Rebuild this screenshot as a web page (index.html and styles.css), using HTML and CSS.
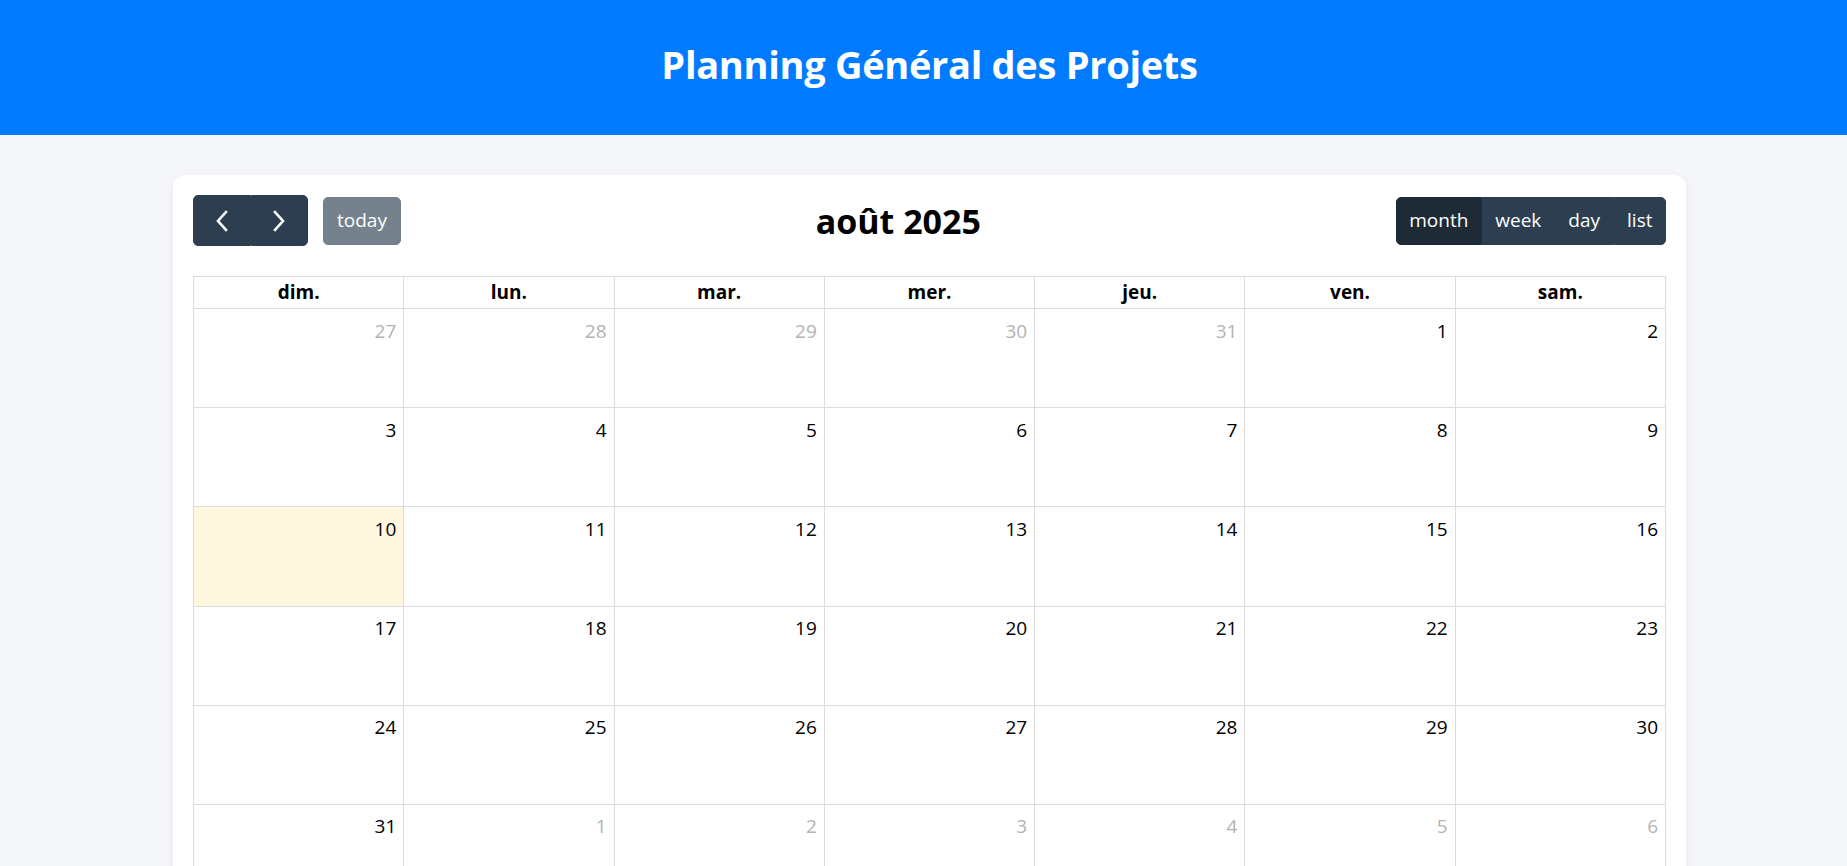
FILE: index.html
```html
<!DOCTYPE html>
<html lang="fr">
<head>
<meta charset="utf-8">
<title>Planning Général des Projets</title>
<link rel="stylesheet" href="styles.css">
</head>
<body>
<header class="site-header">
  <h1 class="site-title">Planning Général des Projets</h1>
</header>
<main class="page">
  <section class="calendar-card">
    <div class="toolbar">
      <div class="toolbar-chunk">
        <div class="btn-group nav-group">
          <button class="btn btn-icon" aria-label="prev">
            <svg width="14" height="22" viewBox="0 0 14 22"><path d="M11 2 L3 11 L11 20" fill="none" stroke="#fff" stroke-width="2.6" stroke-linecap="square"/></svg>
          </button>
          <button class="btn btn-icon" aria-label="next">
            <svg width="14" height="22" viewBox="0 0 14 22"><path d="M3 2 L11 11 L3 20" fill="none" stroke="#fff" stroke-width="2.6" stroke-linecap="square"/></svg>
          </button>
        </div>
        <button class="btn btn-today" disabled>today</button>
      </div>
      <h2 class="toolbar-title">août 2025</h2>
      <div class="toolbar-chunk">
        <div class="btn-group view-group">
          <button class="btn active">month</button>
          <button class="btn">week</button>
          <button class="btn">day</button>
          <button class="btn">list</button>
        </div>
      </div>
    </div>
    <div class="month-grid">
      <div class="dow">dim.</div>
      <div class="dow">lun.</div>
      <div class="dow">mar.</div>
      <div class="dow">mer.</div>
      <div class="dow">jeu.</div>
      <div class="dow">ven.</div>
      <div class="dow">sam.</div>

      <div class="day other"><span class="num">27</span></div>
      <div class="day other"><span class="num">28</span></div>
      <div class="day other"><span class="num">29</span></div>
      <div class="day other"><span class="num">30</span></div>
      <div class="day other"><span class="num">31</span></div>
      <div class="day"><span class="num">1</span></div>
      <div class="day"><span class="num">2</span></div>

      <div class="day"><span class="num">3</span></div>
      <div class="day"><span class="num">4</span></div>
      <div class="day"><span class="num">5</span></div>
      <div class="day"><span class="num">6</span></div>
      <div class="day"><span class="num">7</span></div>
      <div class="day"><span class="num">8</span></div>
      <div class="day"><span class="num">9</span></div>

      <div class="day today"><span class="num">10</span></div>
      <div class="day"><span class="num">11</span></div>
      <div class="day"><span class="num">12</span></div>
      <div class="day"><span class="num">13</span></div>
      <div class="day"><span class="num">14</span></div>
      <div class="day"><span class="num">15</span></div>
      <div class="day"><span class="num">16</span></div>

      <div class="day"><span class="num">17</span></div>
      <div class="day"><span class="num">18</span></div>
      <div class="day"><span class="num">19</span></div>
      <div class="day"><span class="num">20</span></div>
      <div class="day"><span class="num">21</span></div>
      <div class="day"><span class="num">22</span></div>
      <div class="day"><span class="num">23</span></div>

      <div class="day"><span class="num">24</span></div>
      <div class="day"><span class="num">25</span></div>
      <div class="day"><span class="num">26</span></div>
      <div class="day"><span class="num">27</span></div>
      <div class="day"><span class="num">28</span></div>
      <div class="day"><span class="num">29</span></div>
      <div class="day"><span class="num">30</span></div>

      <div class="day"><span class="num">31</span></div>
      <div class="day other"><span class="num">1</span></div>
      <div class="day other"><span class="num">2</span></div>
      <div class="day other"><span class="num">3</span></div>
      <div class="day other"><span class="num">4</span></div>
      <div class="day other"><span class="num">5</span></div>
      <div class="day other"><span class="num">6</span></div>
    </div>
  </section>
</main>
</body>
</html>
```

FILE: styles.css
```css
* { box-sizing: border-box; }

html, body {
  margin: 0;
  padding: 0;
}

body {
  background: #f4f6f9;
  font-family: "Open Sans", "Noto Sans", sans-serif;
  font-size: 20px;
  color: #000;
}

.site-header {
  background: #007bff;
  height: 135px;
  display: flex;
  align-items: center;
  justify-content: center;
  padding-left: 12px;
}

.site-title {
  margin: 0 0 8px 0;
  color: #fff;
  font-size: 38px;
  font-weight: 700;
  letter-spacing: -0.3px;
}

.page {
  padding: 40px 161px 40px 173px;
}

.calendar-card {
  background: #fff;
  border-radius: 12px;
  box-shadow: 0 2px 10px rgba(0, 0, 0, 0.06);
  padding: 20px;
}

.toolbar {
  display: flex;
  justify-content: space-between;
  align-items: center;
  margin-bottom: 30px;
  height: 51px;
}

.toolbar-chunk {
  display: flex;
  align-items: center;
}

.toolbar-title {
  margin: 0;
  font-size: 34px;
  font-weight: 700;
  line-height: 1;
}

.btn {
  font-family: inherit;
  font-size: 19px;
  color: #fff;
  background: #2c3e50;
  border: 1px solid #2c3e50;
  border-radius: 5px;
  padding: 0 13px;
  height: 48px;
  line-height: 1.5;
  cursor: pointer;
}

.btn-group {
  display: flex;
}

.btn-group .btn {
  border-radius: 0;
}

.btn-group .btn:first-child {
  border-top-left-radius: 5px;
  border-bottom-left-radius: 5px;
}

.btn-group .btn:last-child {
  border-top-right-radius: 5px;
  border-bottom-right-radius: 5px;
}

.nav-group .btn-icon {
  width: 57.5px;
  height: 51px;
  display: flex;
  align-items: center;
  justify-content: center;
  padding: 0;
}

.btn-today {
  margin-left: 15px;
  opacity: 0.65;
  cursor: default;
}

.view-group .btn {
  padding: 0 12.5px;
}

.view-group .btn.active {
  background: #1e2b37;
  border-color: #1e2b37;
}

.month-grid {
  display: grid;
  grid-template-columns: repeat(7, 1fr);
  grid-template-rows: 32px repeat(6, 99.2px);
  border-top: 1px solid #ddd;
  border-left: 1px solid #ddd;
}

.dow {
  border-right: 1px solid #ddd;
  border-bottom: 1px solid #ddd;
  text-align: center;
  font-weight: 700;
  font-size: 19px;
  line-height: 30px;
}

.day {
  border-right: 1px solid #ddd;
  border-bottom: 1px solid #ddd;
  text-align: right;
  padding: 6.5px 7px 0 0;
  font-size: 19px;
  line-height: 30px;
}

.day.other .num {
  color: #b3b3b3;
}

.day.today {
  background: #fff8df;
}
```
